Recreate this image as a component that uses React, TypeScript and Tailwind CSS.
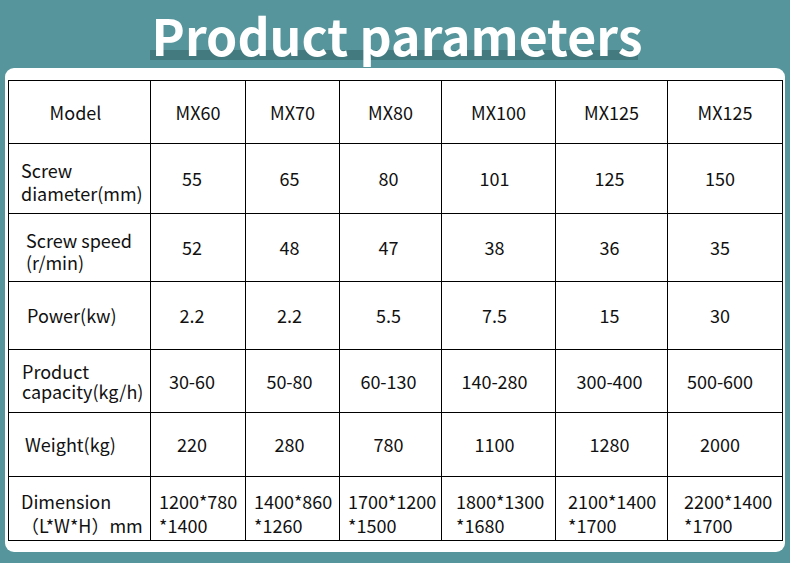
const cols = [142, 95, 94, 102, 114, 112, 115];

// shift of the data text away from the cell centre (pixels of right padding)
const dataPad = ['pr-[12px]', 'pr-[6px]', 'pr-[4px]', 'pr-[8px]', 'pr-[4px]', 'pr-[10px]'];
const dimPad = ['pl-[8px]', 'pl-[8px]', 'pl-[8px]', 'pl-[14px]', 'pl-[12px]', 'pl-[16px]'];

const rows = [
  { h: 'h-[63px]', label: ['Model'], labelCls: 'text-center pr-[8px]', values: ['MX60', 'MX70', 'MX80', 'MX100', 'MX125', 'MX125'], header: true },
  { h: 'h-[70px]', label: ['Screw', 'diameter(mm)'], labelCls: 'pl-[12px] pt-[6px] leading-[23px]', values: ['55', '65', '80', '101', '125', '150'] },
  { h: 'h-[68px]', label: ['Screw speed', '(r/min)'], labelCls: 'pl-[17px] pt-[6px] leading-[22px]', values: ['52', '48', '47', '38', '36', '35'] },
  { h: 'h-[68px]', label: ['Power(kw)'], labelCls: 'pl-[18px]', values: ['2.2', '2.2', '5.5', '7.5', '15', '30'] },
  { h: 'h-[63px]', label: ['Product', 'capacity(kg/h)'], labelCls: 'pl-[13px] leading-[20px]', values: ['30-60', '50-80', '60-130', '140-280', '300-400', '500-600'] },
  { h: 'h-[64px]', label: ['Weight(kg)'], labelCls: 'pl-[16px]', values: ['220', '280', '780', '1100', '1280', '2000'] },
];

const dims = [
  ['1200*780', '*1400'],
  ['1400*860', '*1260'],
  ['1700*1200', '*1500'],
  ['1800*1300', '*1680'],
  ['2100*1400', '*1700'],
  ['2200*1400', '*1700'],
];

export default function App() {
  return (
    <div className="w-[790px] h-[563px] bg-[#55959b] flex flex-col items-center overflow-hidden">
      {/* Title */}
      <div className="relative mt-[8px] pl-[4px]">
        <div className="absolute left-[2px] right-[4px] top-[42px] h-[10px] bg-[#437a7f]" />
        <h1 className="relative text-white font-bold text-[50px] leading-[52px] [font-family:'Noto_Sans_CJK_SC','Noto_Sans',sans-serif]">
          Product parameters
        </h1>
      </div>

      {/* Panel */}
      <div className="mt-[8px] w-[780px] h-[484px] bg-white rounded-[9px] pt-[12px] pl-[3px]">
        <table className="table-fixed border-collapse text-[18px] text-[#111] [font-family:'Noto_Sans_CJK_SC','Noto_Sans',sans-serif]">
          <colgroup>
            {cols.map((w, i) => (
              <col key={i} style={{ width: w }} />
            ))}
          </colgroup>
          <tbody>
            {rows.map((row, r) => (
              <tr key={r} className={row.h}>
                <td className={`border border-black align-middle ${row.labelCls}`}>
                  {row.label.map((l) => (
                    <div key={l}>{l}</div>
                  ))}
                </td>
                {row.values.map((v, i) => (
                  <td key={i} className={`border border-black text-center align-middle ${row.header ? '' : dataPad[i]}`}>
                    {v}
                  </td>
                ))}
              </tr>
            ))}
            <tr className="h-[64px]">
              <td className="border border-black align-middle pl-[12px] pt-[8px] leading-[24px]">
                <div>Dimension</div>
                <div>（L*W*H）mm</div>
              </td>
              {dims.map((d, i) => (
                <td key={i} className={`border border-black align-middle pt-[8px] leading-[24px] ${dimPad[i]}`}>
                  <div>{d[0]}</div>
                  <div>{d[1]}</div>
                </td>
              ))}
            </tr>
          </tbody>
        </table>
      </div>
    </div>
  );
}
